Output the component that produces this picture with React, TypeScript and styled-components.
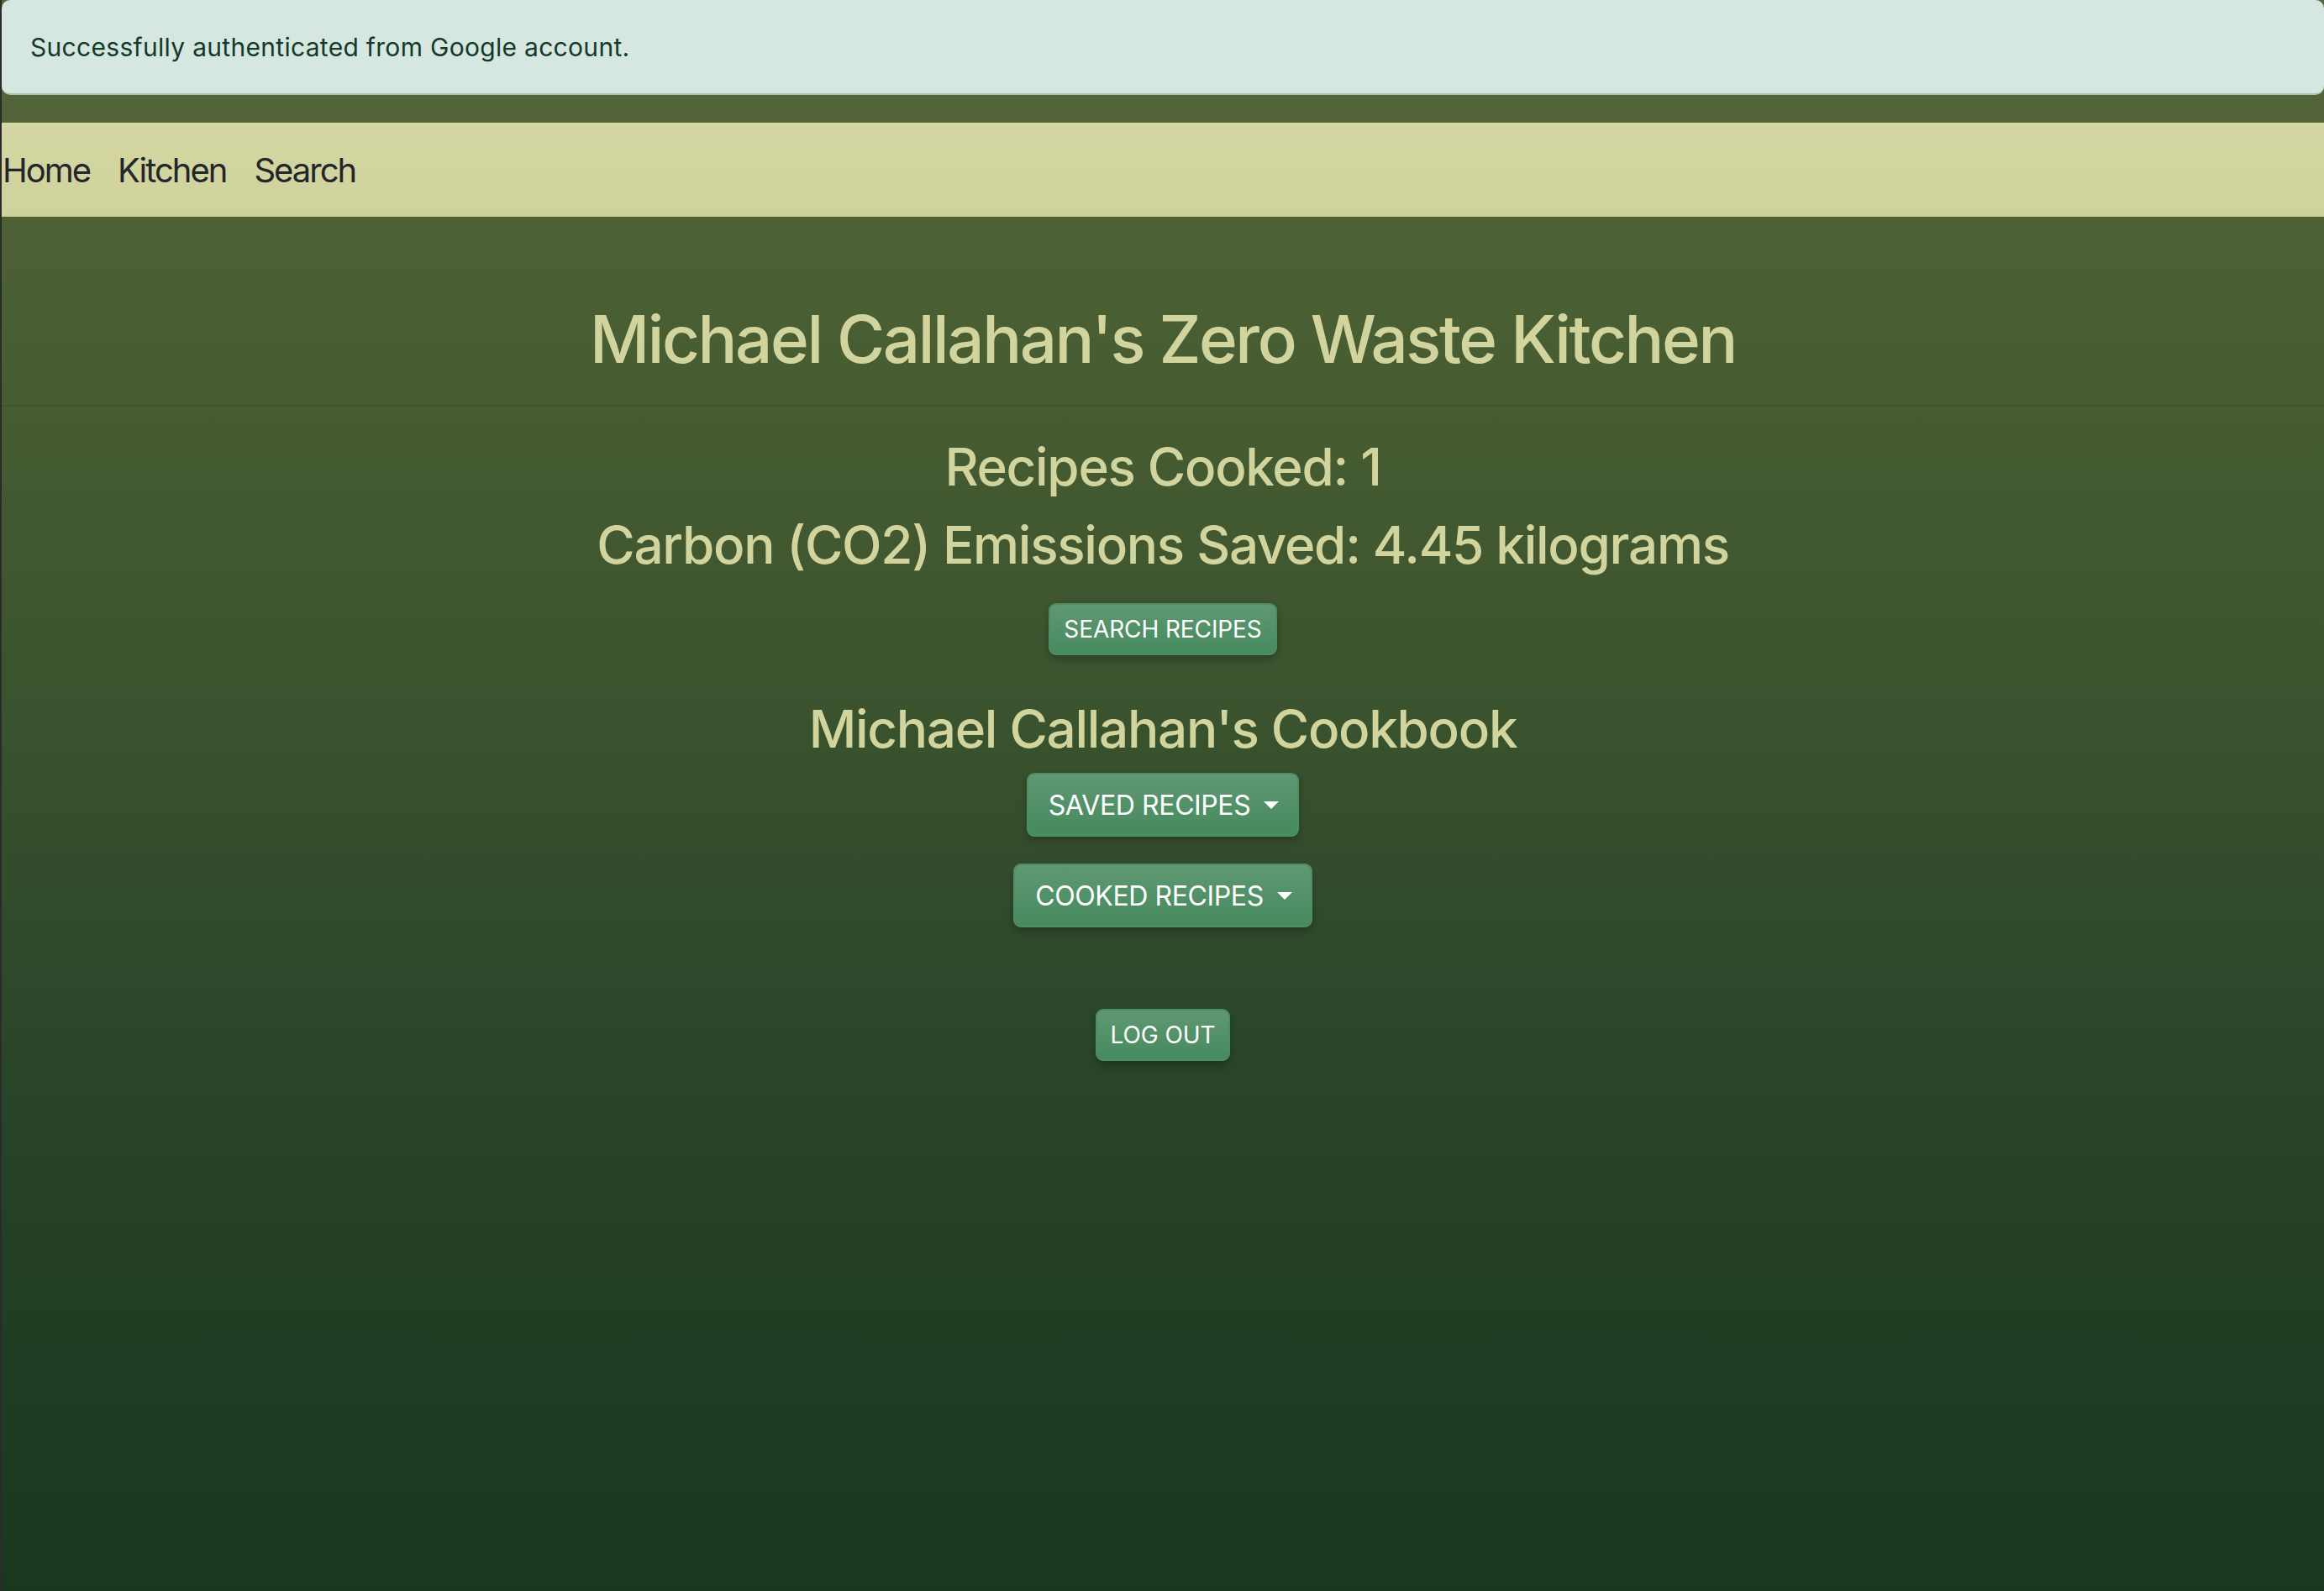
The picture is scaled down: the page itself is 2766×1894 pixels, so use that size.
import styled, { createGlobalStyle } from "styled-components";

const GlobalStyle = createGlobalStyle`
	html, body {
		margin: 0;
		padding: 0;
	}
	body {
		font-family: Inter, "Noto Sans", "Liberation Sans", sans-serif;
		background: #18381f;
	}
`;

const Page = styled.div`
	min-height: 1894px;
	box-sizing: border-box;
	border-left: 2px solid #2b2b2b;
	background: linear-gradient(180deg, #56673a 0%, #4a5e33 20%, #3a532e 45%, #274329 70%, #18381f 100%);
	display: flex;
	flex-direction: column;
`;

const Alert = styled.div`
	background: #d6e6e0;
	color: #123a28;
	border-bottom: 2px solid #a6c6b4;
	border-radius: 10px;
	height: 113px;
	box-sizing: border-box;
	padding: 0 34px;
	display: flex;
	align-items: center;
	font-size: 30px;
	letter-spacing: 0.3px;
	margin-bottom: 33px;
`;

const Nav = styled.nav`
	height: 112px;
	background: linear-gradient(180deg, #d4d7a3 0%, #cfd29b 100%);
	display: flex;
	align-items: center;
	gap: 33px;
	padding-left: 1px;
`;

const NavLink = styled.a`
	color: #23262a;
	font-size: 40px;
	letter-spacing: -2px;
	text-decoration: none;
	cursor: pointer;
`;

const Header = styled.header`
	padding: 98px 0 30px;
	border-bottom: 2px solid #3f532d;
	text-align: center;
`;

const Title = styled.h1`
	margin: 0;
	font-size: 78px;
	line-height: 96px;
	font-weight: 500;
	letter-spacing: -2.4px;
	color: #d2d49e;
`;

const Main = styled.main`
	display: flex;
	flex-direction: column;
	align-items: center;
	padding-top: 35px;
`;

const Stat = styled.h2<{ $gap?: number }>`
	margin: 0 0 ${(p) => p.$gap ?? 0}px;
	font-size: 62px;
	line-height: 74px;
	font-weight: 500;
	letter-spacing: -1.3px;
	color: #d2d49e;
`;

const Button = styled.button<{ $size?: "sm" | "md"; $gap?: number }>`
	font-family: inherit;
	color: #ffffff;
	background: linear-gradient(180deg, #5f9873 0%, #468a5e 100%);
	border: 2px solid #4f8d66;
	border-radius: 9px;
	box-shadow: 0 5px 10px rgba(0, 0, 0, 0.25);
	text-transform: uppercase;
	cursor: pointer;
	display: flex;
	align-items: center;
	justify-content: center;
	gap: 16px;
	box-sizing: border-box;
	margin-bottom: ${(p) => p.$gap ?? 0}px;
	${(p) =>
		p.$size === "md"
			? `height: 76px; padding: 0 22px 0 24px; font-size: 32px; letter-spacing: -0.4px;`
			: `height: 62px; padding: 0 16px; font-size: 28px; letter-spacing: -0.1px;`}
`;

const Caret = styled.span`
	width: 0;
	height: 0;
	border-left: 9px solid transparent;
	border-right: 9px solid transparent;
	border-top: 9px solid #ffffff;
`;

function App() {
	return (
		<>
			<GlobalStyle />
			<Page>
				<Alert>Successfully authenticated from Google account.</Alert>
				<Nav>
					<NavLink>Home</NavLink>
					<NavLink>Kitchen</NavLink>
					<NavLink>Search</NavLink>
				</Nav>
				<Header>
					<Title>Michael Callahan's Zero Waste Kitchen</Title>
				</Header>
				<Main>
					<Stat $gap={19}>Recipes Cooked: 1</Stat>
					<Stat $gap={32}>Carbon (CO2) Emissions Saved: 4.45 kilograms</Stat>
					<Button $gap={51}>Search Recipes</Button>
					<Stat $gap={15}>Michael Callahan's Cookbook</Stat>
					<Button $size="md" $gap={32}>
						Saved Recipes <Caret />
					</Button>
					<Button $size="md" $gap={97}>
						Cooked Recipes <Caret />
					</Button>
					<Button>Log Out</Button>
				</Main>
			</Page>
		</>
	);
}

export default App;
